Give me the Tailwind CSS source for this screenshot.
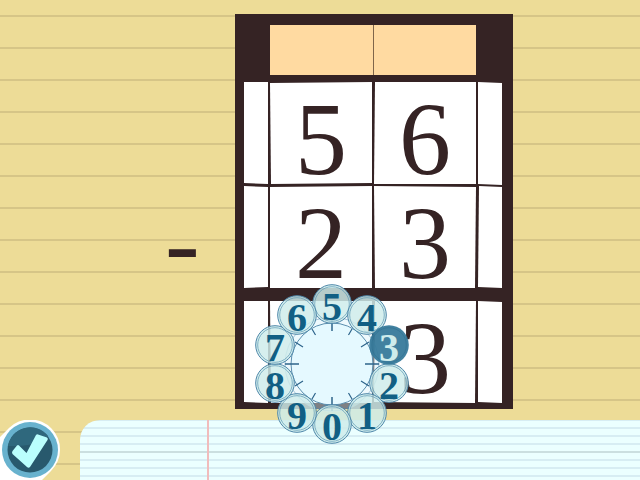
<!DOCTYPE html>
<html lang="en">
<head>
<meta charset="utf-8">
<meta name="viewport" content="width=device-width, initial-scale=1">
<title>Column subtraction</title>
<script src="https://cdn.jsdelivr.net/npm/@tailwindcss/browser@4"></script>
</head>
<body class="relative flex h-screen flex-col overflow-hidden bg-[#eddc97] bg-[repeating-linear-gradient(to_bottom,#eddc97_0px,#eddc97_15px,#d6c587_15px,#d6c587_17px,#eddc97_17px,#eddc97_32px)] font-['Liberation_Serif',serif] text-[#352324]">

<main class="flex flex-1 items-start justify-center pt-[14px] pr-[127px] pl-[165px]">
  <div class="w-[70px] shrink-0 pt-[178px] text-[104px] leading-[102px]" aria-label="minus">-</div>

  <div class="relative shrink-0 bg-[#352324] pt-[11px] pr-[11px] pb-[6px] pl-[9px]">
    <div class="grid grid-cols-[24px_102px_102px_24px] gap-x-[2px] text-center text-[104px] leading-[114px]">
      <span></span>
      <div class="col-span-2 mb-[7px] grid h-[50px] grid-cols-2 gap-x-px bg-[#806549]">
        <input class="min-w-0 bg-[#ffdaa1] text-center text-3xl" aria-label="Borrow tens">
        <input class="min-w-0 bg-[#ffdaa1] text-center text-3xl" aria-label="Borrow ones">
      </div>
      <span></span>

      <span class="bg-white [clip-path:polygon(0_0,100%_0,100%_102px,0_101px)]"></span>
      <span class="h-[103px] bg-white [clip-path:polygon(0_1px,100%_0,100%_101px,1px_102px)]">5</span>
      <span class="h-[103px] bg-white [clip-path:polygon(1px_0,100%_0,100%_102px,0_102px)]">6</span>
      <span class="bg-white [clip-path:polygon(0_0,100%_1px,100%_103px,0_102px)]"></span>

      <span class="mt-px h-[103px] bg-white [clip-path:polygon(0_0,24px_1px,24px_101px,0_102px)]"></span>
      <span class="mt-px h-[103px] bg-white [clip-path:polygon(0_1px,102px_0,100%_102px,0_102px)]">2</span>
      <span class="mt-px h-[103px] bg-white [clip-path:polygon(0_0,100%_1px,101px_102px,1px_102px)]">3</span>
      <span class="mt-px h-[103px] bg-white [clip-path:polygon(1px_0,100%_1px,100%_102px,0_101px)]"></span>

      <span class="mt-[12px] h-[102px] bg-white [clip-path:polygon(0_0,24px_0,24px_102px,0_101px)]"></span>
      <button type="button" class="mt-[12px] h-[102px] bg-white [clip-path:polygon(0_0,100%_0,100%_102px,1px_102px)]" aria-label="Tens answer"></button>
      <span class="mt-[12px] h-[102px] bg-white [clip-path:polygon(1px_0,100%_0,101px_102px,0_101px)]">3</span>
      <span class="mt-[12px] h-[102px] bg-white [clip-path:polygon(0_0,100%_1px,100%_102px,0_101px)]"></span>
    </div>

    <div class="absolute top-[270px] left-[17px] z-10 size-[160px] text-[40px] leading-[34px] font-bold text-[#115f84]" role="group" aria-label="Digit picker">
      <svg class="absolute inset-0 size-full" viewBox="-80 -80 160 160" fill="none" aria-hidden="true">
        <circle r="48" fill="#d9f2fa" fill-opacity=".45"/>
        <circle r="47" stroke="#4b85a8" stroke-opacity=".45"/>
        <circle r="41" fill="#e5f9ff" stroke="#5b8eae"/>
        <g stroke="#2c638a" stroke-width="1.5">
          <path id="tick" d="M0-47V-33"/>
          <use href="#tick" transform="rotate(90)"/><use href="#tick" transform="rotate(180)"/><use href="#tick" transform="rotate(270)"/>
          <g stroke-width="1.2">
            <path d="M20-35L16.500-29M20 35L16.500 29M-20-35L-16.500-29M-20 35L-16.500 29"/>
            <path d="M37-22L29-17M37 22L29 17M-37-22L-29-17M-37 22L-29 17"/>
          </g>
        </g>
        <defs>
          <g id="disc">
            <circle r="19.3" fill="#ceeceb" fill-opacity=".84" stroke="#4b85a8"/>
            <circle r="17.3" stroke="#5d98b4" stroke-opacity=".8" stroke-width=".9"/>
          </g>
        </defs>
        <use href="#disc" x="0" y="-60"/><use href="#disc" x="35" y="-49"/>
        <use href="#disc" x="57" y="19"/><use href="#disc" x="35" y="49"/><use href="#disc" x="0" y="60"/>
        <use href="#disc" x="-35" y="49"/><use href="#disc" x="-57" y="19"/><use href="#disc" x="-57" y="-19"/><use href="#disc" x="-35" y="-49"/>
        <circle cx="57" cy="-19" r="19.8" fill="#35799a" fill-opacity=".94"/>
        <circle cx="57" cy="-19" r="17.3" stroke="#316f91" stroke-opacity=".6"/>
      </svg>
      <button type="button" class="absolute top-0 left-[60px] size-[40px] rounded-full pt-[6px]">5</button>
      <button type="button" class="absolute top-[11px] left-[95px] size-[40px] rounded-full pt-[6px]">4</button>
      <button type="button" class="absolute top-[41px] left-[117px] size-[40px] rounded-full pt-[6px] text-[#ceeceb]" aria-pressed="true">3</button>
      <button type="button" class="absolute top-[79px] left-[117px] size-[40px] rounded-full pt-[6px]">2</button>
      <button type="button" class="absolute top-[109px] left-[95px] size-[40px] rounded-full pt-[6px]">1</button>
      <button type="button" class="absolute top-[120px] left-[60px] size-[40px] rounded-full pt-[6px]">0</button>
      <button type="button" class="absolute top-[109px] left-[25px] size-[40px] rounded-full pt-[6px]">9</button>
      <button type="button" class="absolute top-[79px] left-[3px] size-[40px] rounded-full pt-[6px]">8</button>
      <button type="button" class="absolute top-[41px] left-[3px] size-[40px] rounded-full pt-[6px]">7</button>
      <button type="button" class="absolute top-[11px] left-[25px] size-[40px] rounded-full pt-[6px]">6</button>
    </div>
  </div>
</main>

<footer class="flex h-[60px] shrink-0 items-stretch">
  <button type="button" class="w-[80px] shrink-0" aria-label="Check answer">
    <svg class="h-[60px] w-[80px]" viewBox="0 0 80 60" aria-hidden="true">
      <path d="M9 8A30 30 0 1 1 51 51L42 60H0V17Z" fill="#fff"/>
      <circle cx="30" cy="30" r="28" fill="#68b2ce"/>
      <circle cx="30" cy="30" r="22.5" fill="#28596d"/>
      <path d="M8 26A22.500 22.500 0 0 1 48 16Q36 27 8 26Z" fill="#2f687d"/>
      <path d="M12.500 31L17 25.500Q18 24.500 19 25.500L26.500 33L36 15Q37 14 38 14.500L47 17.500Q48.500 18.500 47.500 20L30 47Q28.500 48.500 27 47L12.500 34Q11.500 32.500 12.500 31Z" fill="#bafffd"/>
    </svg>
  </button>
  <div class="flex-1 rounded-tl-[20px] bg-[linear-gradient(to_right,transparent_127px,#f1bcbc_127px,#f1bcbc_129px,transparent_129px),linear-gradient(to_bottom,transparent_31px,#cbdfe0_31px,#cbdfe0_33px,transparent_33px),repeating-linear-gradient(to_bottom,#d7edf3_0px,#d7edf3_1px,#ebffff_1px,#ebffff_7px,#d7edf3_7px,#d7edf3_8px)]"></div>
</footer>
</body>
</html>
